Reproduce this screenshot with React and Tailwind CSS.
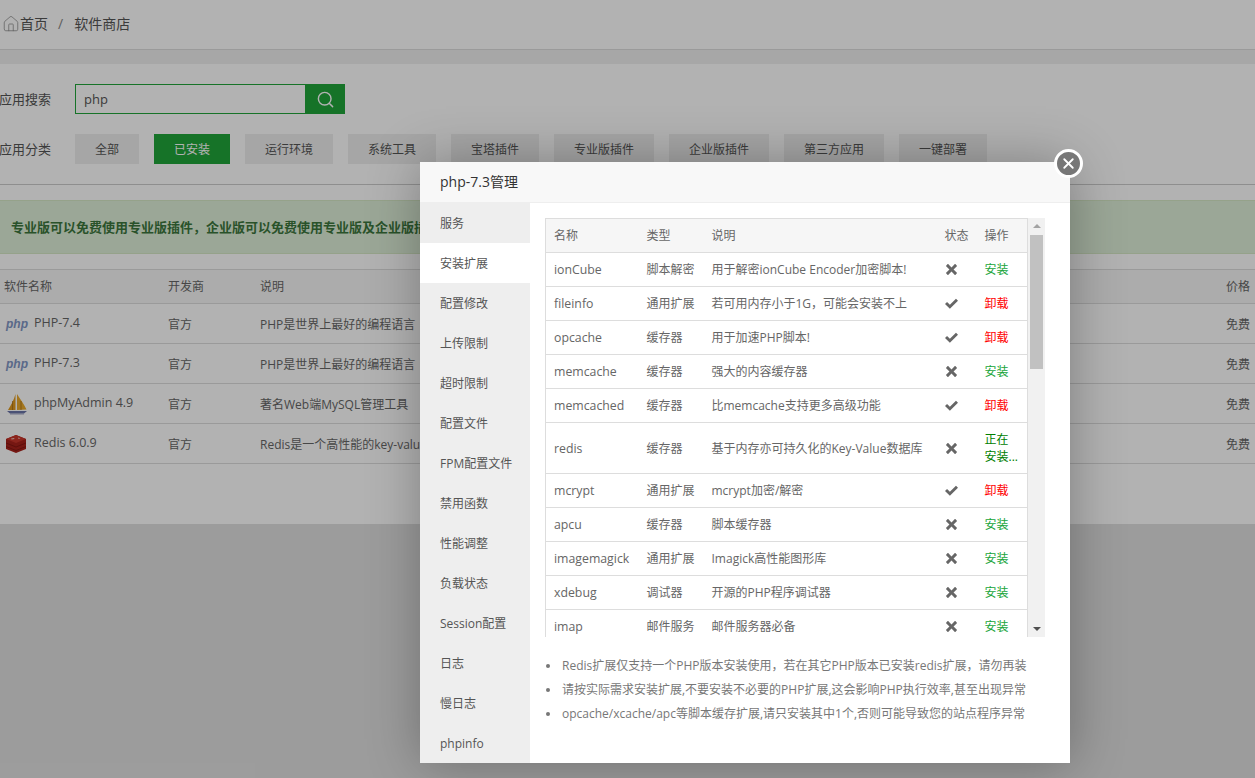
import { Home, Search, X } from "lucide-react";
import { ImCheckmark, ImCross } from "react-icons/im";

const categories = [
  { label: "全部", width: "w-[64px]" },
  { label: "已安装", width: "w-[76px]", active: true },
  { label: "运行环境", width: "w-[88px]" },
  { label: "系统工具", width: "w-[88px]" },
  { label: "宝塔插件", width: "w-[88px]" },
  { label: "专业版插件", width: "w-[100px]" },
  { label: "企业版插件", width: "w-[100px]" },
  { label: "第三方应用", width: "w-[100px]" },
  { label: "一键部署", width: "w-[88px]" },
];

const software = [
  { name: "PHP-7.4", icon: "php", desc: "PHP是世界上最好的编程语言" },
  { name: "PHP-7.3", icon: "php", desc: "PHP是世界上最好的编程语言" },
  { name: "phpMyAdmin 4.9", icon: "pma", desc: "著名Web端MySQL管理工具" },
  { name: "Redis 6.0.9", icon: "redis", desc: "Redis是一个高性能的key-value存储系统" },
];

const menu = ["服务", "安装扩展", "配置修改", "上传限制", "超时限制", "配置文件", "FPM配置文件", "禁用函数", "性能调整", "负载状态", "Session配置", "日志", "慢日志", "phpinfo"];

const extensions = [
  ["ionCube", "脚本解密", "用于解密ionCube Encoder加密脚本!", false],
  ["fileinfo", "通用扩展", "若可用内存小于1G，可能会安装不上", true],
  ["opcache", "缓存器", "用于加速PHP脚本!", true],
  ["memcache", "缓存器", "强大的内容缓存器", false],
  ["memcached", "缓存器", "比memcache支持更多高级功能", true],
  ["redis", "缓存器", "基于内存亦可持久化的Key-Value数据库", false, true],
  ["mcrypt", "通用扩展", "mcrypt加密/解密", true],
  ["apcu", "缓存器", "脚本缓存器", false],
  ["imagemagick", "通用扩展", "Imagick高性能图形库", false],
  ["xdebug", "调试器", "开源的PHP程序调试器", false],
  ["imap", "邮件服务", "邮件服务器必备", false],
];

const notes = [
  "Redis扩展仅支持一个PHP版本安装使用，若在其它PHP版本已安装redis扩展，请勿再装",
  "请按实际需求安装扩展,不要安装不必要的PHP扩展,这会影响PHP执行效率,甚至出现异常",
  "opcache/xcache/apc等脚本缓存扩展,请只安装其中1个,否则可能导致您的站点程序异常",
];

const SoftIcon = ({ type }) => {
  if (type === "php") {
    return <span className="w-[22px] text-center text-xs leading-none font-bold italic text-[#8197c4] [font-family:'Liberation_Sans',sans-serif]">php</span>;
  }
  if (type === "pma") {
    return (
      <svg width="22" height="22" viewBox="0 0 22 22">
        <path d="M9.5 1 L9.5 17 L2 17 C5 12 8 7 9.5 1Z" fill="#e09a1e" />
        <path d="M11 1 C14 6 18 11 20.5 16.5 L11 17Z" fill="#eaa92b" />
        <path d="M6.5 8 L6.5 17 M15 8 L15 17" stroke="#a06a14" strokeWidth="0.7" />
        <path d="M1 18 H21 L18 20.5 H4Z" fill="#6b74a8" />
        <path d="M4 21 H18" stroke="#8d93b8" strokeWidth="0.8" />
      </svg>
    );
  }
  return (
    <svg width="20" height="18" viewBox="0 0 20 18">
      <path d="M0 4 L10 0 L20 4 V14 L10 18 L0 14Z" fill="#a8211a" />
      <path d="M0 8 L10 12 L20 8 M0 11.500 L10 15.500 L20 11.500" stroke="#7d1510" strokeWidth="0.8" fill="none" />
      <path d="M10 0 L20 4 L10 8 L0 4Z" fill="#c9352a" />
      <path d="M5 3.500 L8 3 L8.600 4 L5.600 4.600Z M12 2.500 L14.500 3.200 L12.500 4Z" fill="#f0c2ba" />
    </svg>
  );
};

export default function App() {
  return (
    <div className="relative h-[778px] w-[1255px] overflow-hidden bg-[#e0e0e0] text-xs text-[#666] [font-family:'Open_Sans','Noto_Sans_CJK_SC',sans-serif]">
      {/* Breadcrumb */}
      <div className="flex h-[50px] items-center border-b border-[#ddd] bg-[#fff] pb-[2px] pl-[2px] text-sm text-[#555]">
        <Home size={18} strokeWidth={1} className="text-[#888]" />
        <span>首页</span>
        <span className="mr-[11px] ml-[10px] text-[#888]">/</span>
        <span>软件商店</span>
      </div>
      <div className="h-[14px] bg-[#f0f0f0]"></div>

      <div className="h-[460px] bg-white">
        {/* Search */}
        <div className="flex items-center pt-5 -ml-px">
          <span className="w-[76px] pt-[2px] text-[13px] text-[#555]">应用搜索</span>
          <div className="flex h-[30px] w-[270px]">
            <div className="flex flex-1 items-center border border-[#20a53a] pt-[2px] pl-2 text-[13px] text-[#555]">php</div>
            <div className="flex w-[39px] items-center justify-center bg-[#20a53a] text-white">
              <Search size={19} strokeWidth={1.8} />
            </div>
          </div>
        </div>

        {/* Categories */}
        <div className="mt-5 flex items-center -ml-px">
          <span className="w-[76px] pt-[2px] text-[13px] text-[#555]">应用分类</span>
          <div className="flex gap-[15px]">
            {categories.map((c) => (
              <div
                key={c.label}
                className={`flex h-[30px] items-center justify-center pt-[2px] ${c.width} ${c.active ? "bg-[#20a53a] text-white" : "bg-[#eee] text-[#555]"}`}
              >
                {c.label}
              </div>
            ))}
          </div>
        </div>

        <div className="mt-5 border-t border-[#ccc]"></div>

        {/* Notice */}
        <div className="mt-[15px] flex h-[54px] items-center border-y border-[#d6e9c6] bg-[#dff0d8] pt-[2px] pl-[11px] text-[13px] font-bold text-[#3c763d]">
          专业版可以免费使用专业版插件，企业版可以免费使用专业版及企业版插件
        </div>

        {/* Software table */}
        <div className="mt-[15px] border-t border-[#ddd]">
          <div className="flex h-[34px] items-center border-b border-[#ddd] bg-[#f6f6f6] text-[#666]">
            <div className="w-[168px] pl-1">软件名称</div>
            <div className="w-[92px]">开发商</div>
            <div className="flex-1">说明</div>
            <div className="w-[29px]">价格</div>
          </div>
          {software.map((s) => (
            <div key={s.name} className="flex h-10 items-center border-b border-[#ddd]">
              <div className="flex w-[168px] items-center pl-[6px]">
                <div className="flex w-[28px] items-center">
                  <SoftIcon type={s.icon} />
                </div>
                <span className="text-[12.5px]">{s.name}</span>
              </div>
              <div className="w-[92px] pt-[2px]">官方</div>
              <div className="flex-1 pt-[2px]">{s.desc}</div>
              <div className="w-[29px] pt-[2px]">免费</div>
            </div>
          ))}
        </div>
      </div>

      {/* Dim layer */}
      <div className="absolute inset-0 bg-black/30"></div>

      {/* Modal */}
      <div className="absolute top-[162px] left-[420px] h-[601px] w-[650px] bg-white shadow-[1px_1px_50px_rgba(0,0,0,0.3)]">
        <div className="flex h-[41px] items-center border-b border-[#eee] bg-[#f8f8f8] pl-5 text-sm text-[#333]">php-7.3管理</div>

        <div className="flex">
          <div className="w-[110px] bg-[#eee]">
            {menu.map((m) => (
              <div key={m} className={`flex h-10 items-center pt-[2px] pl-5 text-[#555] ${m === "安装扩展" ? "bg-white" : ""}`}>
                {m}
              </div>
            ))}
          </div>

          <div className="flex-1 pt-[15px] pl-[15px]">
            <div className="flex h-[419px] w-[500px] overflow-hidden">
              <table className="w-[482px] table-fixed self-start border border-[#ddd] leading-[17px]">
                <colgroup>
                  <col className="w-[93px]" />
                  <col className="w-[65px]" />
                  <col className="w-[233px]" />
                  <col className="w-[40px]" />
                  <col className="w-[51px]" />
                </colgroup>
                <thead>
                  <tr className="bg-[#f6f6f6]">
                    {["名称", "类型", "说明", "状态", "操作"].map((h) => (
                      <th key={h} className="border-b border-[#ddd] p-2 text-left font-normal whitespace-nowrap text-[#666]">{h}</th>
                    ))}
                  </tr>
                </thead>
                <tbody>
                  {extensions.map(([name, type, desc, installed, installing]) => (
                    <tr key={name}>
                      <td className="border-b border-[#ddd] p-2 text-[12.3px]">{name}</td>
                      <td className="border-b border-[#ddd] p-2">{type}</td>
                      <td className="border-b border-[#ddd] p-2">{desc}</td>
                      <td className="border-b border-[#ddd] p-2 text-[#666]">
                        {installed ? <ImCheckmark size={13} /> : <ImCross size={11} className="ml-px" />}
                      </td>
                      <td className="border-b border-[#ddd] p-2">
                        {installing ? (
                          <span className="text-[#008000]">正在<br />安装...</span>
                        ) : installed ? (
                          <span className="text-[#f00]">卸载</span>
                        ) : (
                          <span className="text-[#20a53a]">安装</span>
                        )}
                      </td>
                    </tr>
                  ))}
                </tbody>
              </table>

              {/* Scrollbar */}
              <div className="flex w-[18px] flex-col items-center justify-between bg-[#f1f1f1] py-[6px]">
                <div className="h-0 w-0 border-x-[4px] border-b-[4px] border-x-transparent border-b-[#a3a3a3]"></div>
                <div className="mt-[7px] mb-auto h-[134px] w-[13px] bg-[#c1c1c1]"></div>
                <div className="h-0 w-0 border-x-[4px] border-t-[4px] border-x-transparent border-t-[#505050]"></div>
              </div>
            </div>

            <ul className="mt-5 ml-px flex flex-col gap-[7px] text-[#777]">
              {notes.map((n) => (
                <li key={n} className="flex items-center whitespace-nowrap leading-[17px]">
                  <span className="mr-[12px] h-1 w-1 rounded-full bg-[#777]"></span>
                  <span>{n}</span>
                </li>
              ))}
            </ul>
          </div>
        </div>
      </div>

      {/* Close button */}
      <div className="absolute top-[149px] left-[1054px] flex h-[29px] w-[29px] items-center justify-center rounded-full border-[3px] border-white bg-[#777] text-white">
        <X size={17} strokeWidth={2.6} />
      </div>
    </div>
  );
}
